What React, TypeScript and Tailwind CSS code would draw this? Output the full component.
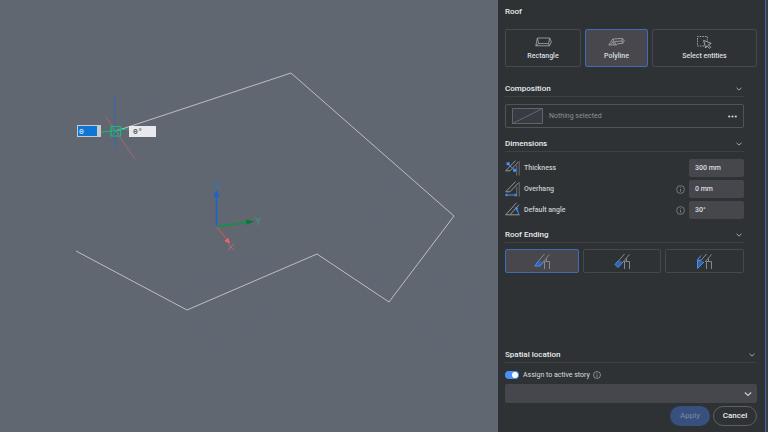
import { useState } from "react";
import type { ReactNode } from "react";

type IconProps = { className?: string };

function Chevron({ className = "h-2 w-2 text-[#a4a7aa]" }: IconProps) {
  return (
    <svg viewBox="0 0 8 8" className={className} fill="none" stroke="currentColor" aria-hidden="true">
      <path d="M1.5 2.8 4 5.1l2.5-2.3" />
    </svg>
  );
}

function InfoIcon({ className = "h-[9px] w-[9px] text-[#85898c]" }: IconProps) {
  return (
    <svg viewBox="0 0 9 9" className={className} fill="none" stroke="currentColor" strokeWidth="0.8" aria-hidden="true">
      <circle cx="4.5" cy="4.5" r="3.9" />
      <path d="M4.5 4v2.7M4.5 2.3v0.9" />
    </svg>
  );
}

function RectangleIcon() {
  return (
    <svg viewBox="0 0 17 10" className="h-[10px] w-[17px]" fill="none" stroke="#a9acae" strokeWidth="0.8" strokeLinejoin="round" aria-hidden="true">
      <path d="M2.4 1h12.3l1.700 4-2 3.800H.8z" />
      <path d="M2.400 1l1.200 5.600h10L14.700 1M3.600 6.600.8 8.800M13.600 6.600l.8 2.200" />
    </svg>
  );
}

function PolylineIcon() {
  return (
    <svg viewBox="0 0 17 10" className="h-[10px] w-[17px]" fill="none" stroke="#a9acae" strokeWidth="0.8" strokeLinejoin="round" aria-hidden="true">
      <path d="M.7 8 4.800 2l9.500-.6 2 2.500-1.600 2.400-5 .5-1.400 1.200z" />
      <path d="M4.800 2l3.500 6M7 4.500l7-.5 .700 2.300M14 4l.3-2.600M2.800 8l2.200-3.500 1.500 3.500" />
    </svg>
  );
}

function SelectIcon() {
  return (
    <svg viewBox="0 0 17 14" className="h-[14px] w-[17px]" fill="none" stroke="#b0b3b5" strokeWidth="0.9" strokeLinejoin="round" aria-hidden="true">
      <path d="M8 11H1.500V1.500h9.800v4" strokeDasharray="1.500 1.100" />
      <path d="M7.600 5.400l7.600 3-2.900 1.300 2.400 2.600-1.300 1.100-2.400-2.600-1.300 2.200z" />
    </svg>
  );
}

function RoofLines() {
  return (
    <g stroke="#94989b">
      <path d="M.7 10.800 10.500.6M5 10.800l8.500-9M.7 10.800H5" strokeWidth="1" />
      <path d="M11.700 5.500V15.500M14.200 1v14.500" stroke="#6b6f73" strokeWidth="1" />
    </g>
  );
}

function ThicknessIcon() {
  return (
    <svg viewBox="0 0 16 16" className="h-4 w-4 shrink-0" fill="none" aria-hidden="true">
      <RoofLines />
      <path d="M3 3.600l6.400 6.600" stroke="#4a90f5" strokeWidth="1" />
      <path d="M1.600 2.300h3v2.900h-3zM8 8.800h3v2.900H8z" fill="#4a90f5" />
    </svg>
  );
}

function OverhangIcon() {
  return (
    <svg viewBox="0 0 16 16" className="h-4 w-4 shrink-0" fill="none" aria-hidden="true">
      <RoofLines />
      <path d="M.5 14h11" stroke="#4a90f5" strokeWidth="1" />
      <path d="M0 14l2.300-1.700v3.400zM12 14l-2.300-1.700v3.400z" fill="#4a90f5" />
    </svg>
  );
}

function AngleIcon() {
  return (
    <svg viewBox="0 0 16 16" className="h-4 w-4 shrink-0" fill="none" aria-hidden="true">
      <path d="M.7 12.800 11.500.8M5 12.800l9-10M.7 12.800h14" stroke="#94989b" strokeWidth="1" />
      <path d="M11 6.500c1.600 1.600 2.500 3.500 2.500 6" stroke="#4a90f5" strokeWidth="1.100" />
      <path d="M9.500 5.500l3.800.2-1.800 3z" fill="#4a90f5" />
    </svg>
  );
}

function EndingIcon({ shape }: { shape: string }) {
  return (
    <svg viewBox="0 0 17 17" className="h-[17px] w-[17px]" fill="none" aria-hidden="true">
      <path d="M4.500 8 10.500 1M9 9l6.500-7.500M10.500 16V8.500h5V16M12.500 8.500V5.500" stroke="#85898d" strokeWidth="1" />
      <path d={shape} fill="#3464a6" stroke="#4a90f5" strokeWidth="1" strokeLinejoin="round" />
    </svg>
  );
}

function SectionHeader({ title }: { title: string }) {
  return (
    <button type="button" className="flex h-[18px] w-full items-center justify-between border-b border-[#3d4144] pt-[2px] pr-[1px] text-left text-[8px] font-medium text-[#e9ebec]">
      {title}
      <Chevron />
    </button>
  );
}

function ModeButton({ label, active, onClick, children }: { label: string; active: boolean; onClick: () => void; children: ReactNode }) {
  return (
    <button
      type="button"
      aria-pressed={active}
      onClick={onClick}
      className={`flex h-[38px] flex-col items-center justify-end gap-[2px] rounded-[2px] border pb-[5px] text-[7px] font-medium text-[#dcdee0] ${
        active ? "border-[#3f6db5] bg-[#47474d]" : "border-[#45494c]"
      }`}
    >
      <span className="flex h-[14px] items-center">{children}</span>
      <span className="leading-[10px]">{label}</span>
    </button>
  );
}

function DimensionRow({ id, label, value, info, icon }: { id: string; label: string; value: string; info?: boolean; icon: ReactNode }) {
  return (
    <div className="flex h-[18px] items-center">
      {icon}
      <label htmlFor={id} className="ml-[3px] flex-1 text-[7px] font-medium text-[#c9cccd]">
        {label}
      </label>
      {info && <InfoIcon />}
      <input id={id} defaultValue={value} className="ml-1 h-[18px] w-[55px] rounded-[2px] bg-[#46474d] px-[6px] text-[7px] font-medium text-[#dcdee0] outline-none" />
    </div>
  );
}

const endings = [
  { name: "Horizontal ending", shape: "M4.500 8 .8 13h5.200L9.500 9" },
  { name: "Perpendicular ending", shape: "M4.500 7.500 1 11.500l3 3L9 9" },
  { name: "Vertical ending", shape: "M5 7 1.500 8V15.500L8 9M1.500 9.500V6.500L5 2.500" },
];

function Viewport() {
  return (
    <main className="relative min-w-0 flex-1 overflow-hidden bg-[#616770]">
      <svg width="498" height="432" viewBox="0 0 498 432" className="absolute top-0 left-0" fill="none" role="img" aria-label="Roof outline">
        <g stroke="#54749c" strokeWidth="0.8" opacity="0.45">
          <path d="M182 295l88-36M317 109l11 9M362 151l42 35 34 34" strokeDasharray="14 6" />
          <path d="M187 312l18 30M257 303c3 14-2 28-18 40M212 346h10M374 287l22-27M418 268l31 15M466 294c5 9 3 24-2 34M434 343h18M389 302l9 10M382 210c-3 6-3 12 0 18M454 195l21 5M458 219l18 12M407 318l18 18" strokeDasharray="8 4" />
          <path d="M123 121l42-16M250 80l32-10" strokeDasharray="8 5" />
        </g>
        <path d="M116 131 291 73 454 216 389 302 317 254 187 310 76 251" stroke="#bcbec7" />
        <path d="M106 117l29 42" stroke="#a86578" />
        <path d="M114.500 96v22l1 5v26" stroke="#3568b3" />
        <path d="M101 132l28-3" stroke="#21b573" />
        <path d="M111 126.500h9.500v9.500H111z" stroke="#10bd82" strokeWidth="1.200" />
        <path d="M112 128l7 6M119 128l-6 6" stroke="#10bd82" strokeWidth="0.700" />
        <path d="M216.500 226v-32" stroke="#1764d2" strokeWidth="1.600" />
        <path d="M216.500 190l3 7h-6z" fill="#1764d2" />
        <path d="M214.500 182.500h4.500l-4.500 5.500h4.500" stroke="#2f72cc" />
        <path d="M217 226.500l34-4.500" stroke="#0b9446" strokeWidth="1.600" />
        <path d="M254 221.500l-8-2 .6 5.300z" fill="#08783a" />
        <path d="M255.500 217.500l2.500 3.500 2.500-3.500M258 221v4" stroke="#2bae72" strokeWidth="0.800" />
        <path d="M217 227l11 14" stroke="#dc5459" />
        <path d="M229.500 243l-4.500-2 3-2.500z" fill="#ee6469" stroke="#ee6469" />
        <path d="M228 244l6 6M234 243.500l-6 7" stroke="#c56b70" strokeWidth="0.800" />
      </svg>
      <div className="absolute top-[125px] left-[77px] flex h-3 w-6 bg-[#c9c9ce] p-[1px] pr-1">
        <input aria-label="Length" defaultValue="0" className="h-full w-full bg-[#0f76d6] px-[1px] font-['Liberation_Mono',monospace] text-[8px] text-white outline-none" />
      </div>
      <input
        aria-label="Angle"
        defaultValue="0°"
        className="absolute top-[126px] left-[129px] h-[11px] w-[27px] bg-[#e9e8ec] px-1 font-['Liberation_Mono',monospace] text-[8px] text-[#111] outline-none"
      />
    </main>
  );
}

export default function App() {
  const [mode, setMode] = useState("Polyline");
  const [ending, setEnding] = useState(0);

  return (
    <div className="flex min-h-screen bg-[#2e3235] font-['Roboto',sans-serif] leading-[10px]">
      <Viewport />
      <aside className="flex w-[270px] shrink-0 flex-col border-r-2 border-[#3a3d41]">
        <div className="flex flex-1 flex-col border-r border-[#4467ab] pt-[7px] pr-2 pb-[6px] pl-[7px]">
          <h1 className="text-[8px] leading-[10px] font-medium text-[#e9ebec]">Roof</h1>

          <div className="mt-3 grid grid-cols-[76fr_63fr_105fr] gap-1">
            <ModeButton label="Rectangle" active={mode === "Rectangle"} onClick={() => setMode("Rectangle")}>
              <RectangleIcon />
            </ModeButton>
            <ModeButton label="Polyline" active={mode === "Polyline"} onClick={() => setMode("Polyline")}>
              <PolylineIcon />
            </ModeButton>
            <ModeButton label="Select entities" active={mode === "Select"} onClick={() => setMode("Select")}>
              <SelectIcon />
            </ModeButton>
          </div>

          <div className="mt-3 flex flex-col pr-[13px]">
            <SectionHeader title="Composition" />
            <button type="button" className="mt-[7px] flex h-6 items-center rounded-[2px] border border-[#505457] px-[6px] text-[7px] text-[#8d9194]">
              <svg viewBox="0 0 31 16" className="h-4 w-[31px]" aria-hidden="true">
                <path d="M.5.5h30v15H.5zM.5 15.500l30-15" fill="#383b42" stroke="#676b70" strokeWidth="0.900" />
              </svg>
              <span className="ml-[6px] flex-1 text-left">Nothing selected</span>
              <svg viewBox="0 0 9 3" className="h-[3px] w-[9px]" fill="#d0d2d4" aria-hidden="true">
                <circle cx="1.200" cy="1.500" r="1.100" />
                <circle cx="4.500" cy="1.500" r="1.100" />
                <circle cx="7.800" cy="1.500" r="1.100" />
              </svg>
            </button>

            <div className="mt-[6px]">
              <SectionHeader title="Dimensions" />
            </div>
            <div className="mt-[7px] flex flex-col gap-[3px]">
              <DimensionRow id="thickness" label="Thickness" value="300 mm" icon={<ThicknessIcon />} />
              <DimensionRow id="overhang" label="Overhang" value="0 mm" info icon={<OverhangIcon />} />
              <DimensionRow id="angle" label="Default angle" value="30°" info icon={<AngleIcon />} />
            </div>

            <div className="mt-[6px]">
              <SectionHeader title="Roof Ending" />
            </div>
            <div className="mt-[6px] grid grid-cols-[74fr_78fr_79fr] gap-1">
              {endings.map((item, index) => (
                <button
                  key={item.name}
                  type="button"
                  aria-label={item.name}
                  aria-pressed={ending === index}
                  onClick={() => setEnding(index)}
                  className={`flex h-6 items-center justify-center rounded-[2px] border ${ending === index ? "border-[#3f6db5] bg-[#47474d]" : "border-[#45494c]"}`}
                >
                  <EndingIcon shape={item.shape} />
                </button>
              ))}
            </div>
          </div>

          <div className="mt-auto flex flex-col">
            <SectionHeader title="Spatial location" />
            <label className="mt-[7px] flex h-[10px] items-center self-start text-[7px] text-[#dcdee0]">
              <input type="checkbox" defaultChecked className="peer sr-only" />
              <span className="mr-1 flex h-2 w-[14px] items-center justify-end rounded-full bg-[#4a90f5] p-[1px]">
                <span className="h-[6px] w-[6px] rounded-full bg-white" />
              </span>
              Assign to active story
              <InfoIcon className="ml-[3px] h-2 w-2 text-[#b0b3b5]" />
            </label>
            <div className="relative mt-1 h-[19px]">
              <select aria-label="Story" className="h-full w-full appearance-none rounded-[2px] bg-[#46474d] px-2 text-[7px] text-white outline-none">
                <option></option>
              </select>
              <Chevron className="pointer-events-none absolute top-[5px] right-1 h-[10px] w-[10px] text-[#c9cbcd]" />
            </div>
            <div className="mt-[3px] flex justify-end gap-[3px]">
              <button type="button" disabled className="h-5 w-10 rounded-full bg-[#38507d] text-[8px] text-[#7f8ba3]">
                Apply
              </button>
              <button type="button" className="h-5 w-11 rounded-full border border-[#5c6063] text-[8px] font-medium text-[#eceded]">
                Cancel
              </button>
            </div>
          </div>
        </div>
      </aside>
    </div>
  );
}
